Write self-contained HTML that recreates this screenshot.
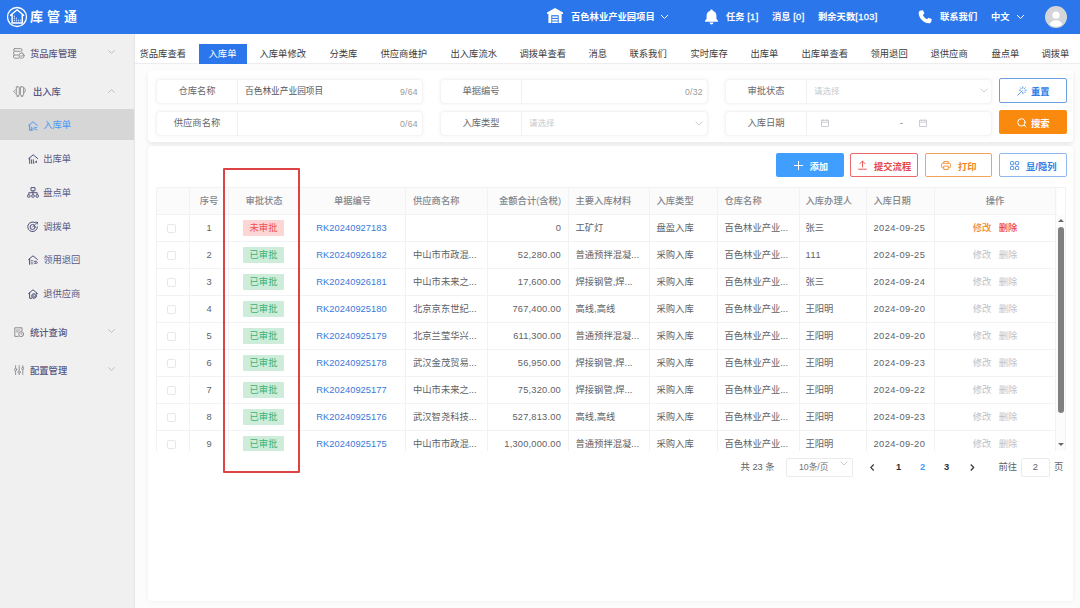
<!DOCTYPE html>
<html lang="zh-CN">
<head>
<meta charset="utf-8">
<title>库管通 - 入库单</title>
<style>
*{box-sizing:border-box;margin:0;padding:0}
html,body{width:1080px;height:608px;overflow:hidden}
body{position:relative;background:#fcfcfc;font-family:"Liberation Sans","Noto Sans CJK SC",sans-serif;font-size:9.3px;color:#606266;-webkit-font-smoothing:antialiased}
.abs{position:absolute}
/* header */
#hd{position:absolute;left:0;top:0;width:1080px;height:34px;background:#2a76ea;color:#fff}
#hd .t{position:absolute;top:0;height:34px;line-height:34px;font-size:9.3px;white-space:nowrap;font-weight:700}
#hd .t b{font-weight:400;letter-spacing:.35px;-webkit-text-stroke:.3px #fff}
#logo-t{position:absolute;left:30px;top:0;height:34px;line-height:33px;font-size:13px;letter-spacing:4px;color:#fff;font-weight:700}
/* sidebar */
#sb{position:absolute;left:0;top:34px;width:134.500px;height:574px;background:#f0f0f0;box-shadow:inset -1.500px 0 1px -0.500px rgba(0,0,0,.05)}
#sb .it{position:absolute;left:0;width:134px;height:30px;line-height:30px;font-size:9.3px;color:#5a5a84;white-space:nowrap}
#sb .it.p{font-weight:500;color:#565680}
#sb .it span{position:absolute;top:0}
#sb .act{background:#d6d6d6;color:#4a9af5}
#sb svg{z-index:2}
/* tabs */
#tabs{position:absolute;left:134.500px;top:34px;width:946px;height:30px;background:#fff;border-bottom:1px solid #ededed}
#tabs .tb{position:absolute;top:10px;height:20px;line-height:20px;font-size:9.3px;color:#3c3c3c;white-space:nowrap;text-align:center}
#tabs .tb.on{background:#2a76ea;color:#fff}
/* panels */
.card{position:absolute;background:#fff;border-radius:4px}
.fld{position:absolute;height:25px;border:1px solid #f4f4f4;border-radius:4px;background:#fff;box-shadow:0 0 4px rgba(0,0,0,.055)}
.fld .lb{position:absolute;left:0;top:0;width:81px;height:23px;line-height:23px;text-align:center;border-right:1px solid #f0f0f0;color:#66686c;font-size:9.3px}
.fld .v{position:absolute;left:88px;top:0;height:23px;line-height:23px;font-size:8.7px;color:#555;white-space:nowrap}
.fld .ph{color:#c6c8cc;font-size:8.500px}
.fld .cnt{position:absolute;right:4px;top:0;height:23px;line-height:24px;font-size:8.7px;color:#999;letter-spacing:.3px}
.btn{position:absolute;height:24.5px;line-height:26px;border-radius:2px;font-size:9.3px;font-weight:700;text-align:center;white-space:nowrap;border:1px solid transparent}
/* table */
#tbl{position:absolute;left:156px;top:187px;width:910px;height:264px;overflow:hidden;border:1px solid #f1f2f4;border-bottom:none;background:#fff}
.row{position:absolute;left:0;width:900px;height:27px;border-bottom:1px solid #f1f2f4}
.row.h{background:#fbfbfb;color:#666;font-weight:500}
.c{position:absolute;top:0;height:27px;line-height:26px;font-size:9.3px;color:#606266;white-space:nowrap;overflow:hidden;border-right:1px solid #f1f2f4;padding:0 7px}
.row.h .c{color:#83868c}
.c.n2{letter-spacing:.2px}.c.n3{letter-spacing:.5px}.c.n4{letter-spacing:.42px}
.c.ctr{text-align:center;padding:0}
.c.r{text-align:right}
.c a{color:#3a78d8;text-decoration:none;letter-spacing:.05px;margin-right:2px}
.tag{display:inline-block;height:16px;line-height:16px;margin-right:1px;padding:0 6.900px;font-size:9.3px;border-radius:1px;vertical-align:middle;position:relative;top:-1px}
.tag.g{background:#cdecda;color:#3bb374}
.tag.rd{background:#fcd5d5;color:#f05050}
.cb{position:absolute;left:11px;top:9px;width:9px;height:9px;border:1px solid #e8e8e8;border-radius:2px;background:#fff}
.op1{color:#f08a24;font-weight:500}.op2{color:#f04040;font-weight:500;margin-left:7.500px}
.d2{margin-left:7.500px}
.dis{color:#bfc1c5}
.c.p6{padding-left:6.500px}.c.p5{padding-left:5.500px}
/* pagination */
#pg{position:absolute;top:458px;left:700px;width:370px;height:18px;font-size:9.3px;color:#606266}
#pg span{position:absolute;top:0;height:18px;line-height:18px;white-space:nowrap}
</style>
</head>
<body>
<div id="hd">
  <svg class="abs" style="left:5.900px;top:5.900px" width="22" height="22" viewBox="0 0 22 22" fill="none" stroke="#fff"><circle cx="11" cy="11" r="9.500" stroke-width="1.300"/><path d="M4.600 9.300L11.100 3.700l6.500 5.600M6.100 8.600v8.500h10.200V8.600" stroke-width="1.500" stroke-linejoin="round" stroke-linecap="round"/><path d="M8.400 9.800v6.400M10.400 11.800v4.400M12.400 13.800v2.400M14.300 13.800v2.400" stroke-width="1.100" stroke-dasharray="1 1"/></svg>
  <div id="logo-t">库管通</div>
  <svg class="abs" style="left:547px;top:8px" width="16" height="15" viewBox="0 0 16 15"><path d="M8 0 L16 4.6 V6 H14.6 V15 H1.4 V6 H0 V4.6 Z" fill="#fff"/><rect x="4.3" y="7.2" width="7.4" height="7.8" fill="#2a76ea"/><rect x="5.2" y="8.4" width="5.6" height="1.5" fill="#fff"/><rect x="5.2" y="11" width="5.6" height="1.5" fill="#fff"/><rect x="5.2" y="13.5" width="5.6" height="1.5" fill="#fff"/></svg>
  <div class="t" style="left:571px">百色林业产业园项目</div>
  <svg class="abs" style="left:660px;top:14px" width="9" height="6" viewBox="0 0 9 6" fill="none" stroke="#fff" stroke-width="1"><path d="M1 1 L4.5 4.5 L8 1"/></svg>
  <svg class="abs" style="left:704px;top:9px" width="15" height="16" viewBox="0 0 15 16" fill="#fff"><path d="M7.5 0.5c.8 0 1.3.5 1.3 1.2 2.2.6 3.6 2.4 3.6 4.9v3.2l1.6 2v.9H1v-.9l1.6-2V6.600c0-2.500 1.400-4.300 3.600-4.900C6.200 1 6.700.5 7.500.5z"/><path d="M5.600 13.600h3.800c0 1.100-.8 1.900-1.900 1.900s-1.900-.8-1.900-1.900z"/></svg>
  <div class="t" style="left:726px">任务 <b>[1]</b></div>
  <div class="t" style="left:772px">消息 <b>[0]</b></div>
  <div class="t" style="left:818px">剩余天数<b>[103]</b></div>
  <svg class="abs" style="left:918px;top:10px" width="14" height="14" viewBox="0 0 14 14" fill="#fff"><path d="M2.900 0.600 L5 0.300 L6.400 3.600 L4.800 4.900 C5.600 6.700 7.200 8.400 9.100 9.300 L10.400 7.700 L13.700 9.100 L13.400 11.200 C13.200 12.600 12 13.500 10.600 13.300 C5.200 12.500 1.400 8.600 0.700 3.400 C0.500 2 1.500 0.800 2.900 0.600z"/></svg>
  <div class="t" style="left:940px">联系我们</div>
  <div class="t" style="left:991px">中文</div>
  <svg class="abs" style="left:1016px;top:14px" width="9" height="6" viewBox="0 0 9 6" fill="none" stroke="#fff" stroke-width="1"><path d="M1 1 L4.500 4.500 L8 1"/></svg>
  <svg class="abs" style="left:1045px;top:6px" width="22" height="22" viewBox="0 0 22 22"><circle cx="11" cy="11" r="11" fill="#d4d5d8"/><circle cx="11" cy="9.200" r="3.600" fill="#fff"/><path d="M4.600 18.200c1.200-2.800 3.500-4 6.400-4s5.200 1.200 6.400 4A9.500 9.500 0 0 1 11 20.800a9.500 9.500 0 0 1-6.400-2.600z" fill="#fff"/></svg>
</div>

<div id="sb">
<svg class="abs" style="left:13px;top:13.500px" width="12" height="11" viewBox="0 0 12 11" fill="none" stroke="#8c8c90" stroke-width=".9" stroke-linecap="round" stroke-linejoin="round"><rect x=".6" y=".6" width="8.400" height="2.700" rx="1.200"/><path d="M.6 4.700v1.100c0 .7.500 1.200 1.200 1.200h3.600M9 4.600v-.1M.6 7.900v1.100c0 .7.500 1.200 1.200 1.200h3.800M.6 4.500c0-.700.500-1.200 1.200-1.200M.6 7.800c0-.5.300-.8.800-.8"/><circle cx="8.500" cy="7.700" r="2.600"/><path d="M7.300 7.700l.9.900 1.500-1.600"/></svg>
<svg class="abs" style="left:13px;top:51.500px" width="14" height="11.500" viewBox="0 0 14 11.500" fill="none" stroke="#8c8c90" stroke-width=".9" stroke-linecap="round" stroke-linejoin="round"><rect x="3.300" y=".8" width="3" height="8.600" rx=".7"/><rect x="7.400" y=".8" width="3.200" height="8.600" rx=".7"/><path d="M2.400 3.800L.7 5.500l1.700 1.700M10.600 1.600c2.200.3 2.600 4.200.2 5.600M4 10.700h1.600M8.200 10.700h1.600"/></svg>
<svg class="abs" style="left:28px;top:86.5px" width="10" height="10" viewBox="0 0 10 10" fill="none" stroke="#4a9af5" stroke-width="1" stroke-linecap="round" stroke-linejoin="round"><path d="M.6 4.500L5 .8l4.400 3.700M1.600 4v5.300h2.200"/><path d="M3.400 6.200v3M5 7v2.200M6.600 6.400h2.200M6.600 8h1.400l1 1.200" stroke-width=".9"/></svg>
<svg class="abs" style="left:27.5px;top:120px" width="10.5" height="10" viewBox="0 0 10.5 10" fill="none" stroke="#4d4d78" stroke-width="1" stroke-linecap="round" stroke-linejoin="round"><path d="M.7 4.600L5.200.8l4.500 3.800M1.700 4v5.400"/><path d="M3.600 5.800v3.600M5.400 5.800v3.600M6.800 8.600l1.400-1.200M8.400 7.200v1.400" stroke-width=".9"/></svg>
<svg class="abs" style="left:27px;top:153.300px" width="12" height="11" viewBox="0 0 12 11" fill="none" stroke="#4d4d78" stroke-width=".95" stroke-linejoin="round"><rect x="4" y=".6" width="4" height="3.200"/><path d="M6 3.800v1.900M1.800 7.700V5.700h8.400v2M6 5.700v2"/><rect x=".6" y="7.800" width="2.400" height="2.400" rx=".5"/><rect x="4.800" y="7.800" width="2.400" height="2.400" rx=".5"/><rect x="9" y="7.800" width="2.400" height="2.400" rx=".5"/></svg>
<svg class="abs" style="left:27px;top:186.5px" width="11.5" height="11.5" viewBox="0 0 11.5 11.5" fill="none" stroke="#4d4d78" stroke-width="1" stroke-linecap="round" stroke-linejoin="round"><path d="M10.400 5.800a4.800 4.800 0 1 1-2.600-4.300"/><circle cx="5.600" cy="6" r="2.500"/><path d="M5.600 6l4.600-4.600M8.600 1.200h1.800v1.800" stroke-width=".9"/></svg>
<svg class="abs" style="left:27.5px;top:220.5px" width="10" height="10" viewBox="0 0 10 10" fill="none" stroke="#4d4d78" stroke-width="1" stroke-linecap="round" stroke-linejoin="round"><path d="M.6 4.500L5 .8l4.400 3.700M1.600 4v5.300"/><path d="M3.200 5.600h.1M4.800 5.600h.1M3.200 7.200h.1M4.800 7.200h.1M3.200 8.800h.1M4.800 8.800h.1" stroke-width="1"/><path d="M6.600 6.600h1.800a.9.900 0 0 1 0 1.800H6.600M7.300 5.900l-.7.700.7.700" stroke-width=".8"/></svg>
<svg class="abs" style="left:27.5px;top:254.8px" width="10" height="10" viewBox="0 0 10 10" fill="none" stroke="#4d4d78" stroke-width="1" stroke-linecap="round" stroke-linejoin="round"><path d="M.6 4.500L5 .8l4.400 3.700M1.600 4v5.300h2M8.600 4.200v1"/><circle cx="6" cy="7" r="2.300"/><path d="M6 5.800a1.200 1.200 0 1 0 1.200 1.200" stroke-width=".8"/></svg>
<svg class="abs" style="left:13.5px;top:293px" width="10.5" height="10.5" viewBox="0 0 10.5 10.5" fill="none" stroke="#8c8c90" stroke-width="1" stroke-linecap="round" stroke-linejoin="round"><path d="M8 3.800V.8H.8v8.600h3.400"/><path d="M2.400 3h3.600M2.400 4.800h2" stroke-width=".8"/><circle cx="7.200" cy="7.200" r="2.500"/><path d="M7.200 6v1.300l.9.600" stroke-width=".8"/></svg>
<svg class="abs" style="left:13.5px;top:330.5px" width="10.5" height="10.5" viewBox="0 0 10.5 10.5" fill="none" stroke="#8c8c90" stroke-width="0.9" stroke-linecap="round" stroke-linejoin="round"><path d="M1.600.6v2.600M1.600 6v4M5.200.6v5M5.200 8.600v1.400M8.800.6v1.400M8.800 4.800v5.200"/><circle cx="1.600" cy="4.600" r="1.200"/><circle cx="5.200" cy="7.200" r="1.200"/><circle cx="8.800" cy="3.400" r="1.200"/></svg>
<svg class="abs" style="left:108px;top:16px" width="7" height="4" viewBox="0 0 7 4" fill="none" stroke="#b8b8bc" stroke-width="0.9" stroke-linecap="round" stroke-linejoin="round"><path d="M.6 .6l2.900 2.800L6.400.6"/></svg>
<svg class="abs" style="left:108px;top:54.5px" width="7" height="4" viewBox="0 0 7 4" fill="none" stroke="#b8b8bc" stroke-width="0.9" stroke-linecap="round" stroke-linejoin="round"><path d="M.6 3.400L3.500.6l2.900 2.800"/></svg>
<svg class="abs" style="left:108px;top:295px" width="7" height="4" viewBox="0 0 7 4" fill="none" stroke="#b8b8bc" stroke-width="0.9" stroke-linecap="round" stroke-linejoin="round"><path d="M.6 .6l2.900 2.800L6.400.6"/></svg>
<svg class="abs" style="left:108px;top:332.5px" width="7" height="4" viewBox="0 0 7 4" fill="none" stroke="#b8b8bc" stroke-width="0.9" stroke-linecap="round" stroke-linejoin="round"><path d="M.6 .6l2.900 2.800L6.400.6"/></svg>
  <div class="it p" style="top:5px"><span style="left:30px">货品库管理</span></div>
  <div class="it p" style="top:43px"><span style="left:33px">出入库</span></div>
  <div class="it act" style="top:75px;height:31px;line-height:33px"><span style="left:43.200px">入库单</span></div>
  <div class="it" style="top:110.300px"><span style="left:43.200px">出库单</span></div>
  <div class="it" style="top:144.300px"><span style="left:43.200px">盘点单</span></div>
  <div class="it" style="top:178px"><span style="left:43.200px">调拨单</span></div>
  <div class="it" style="top:211.300px"><span style="left:43.200px">领用退回</span></div>
  <div class="it" style="top:245px"><span style="left:43.200px">退供应商</span></div>
  <div class="it p" style="top:283.700px"><span style="left:30px">统计查询</span></div>
  <div class="it p" style="top:322px"><span style="left:30px">配置管理</span></div>
</div>

<div id="tabs">
  <div class="tb" style="left:5px">货品库查看</div>
  <div class="tb on" style="left:64px;width:48px">入库单</div>
  <div class="tb" style="left:125px">入库单修改</div>
  <div class="tb" style="left:195px">分类库</div>
  <div class="tb" style="left:246px">供应商维护</div>
  <div class="tb" style="left:316px">出入库流水</div>
  <div class="tb" style="left:385px">调拨单查看</div>
  <div class="tb" style="left:454px">消息</div>
  <div class="tb" style="left:495px">联系我们</div>
  <div class="tb" style="left:556px">实时库存</div>
  <div class="tb" style="left:616px">出库单</div>
  <div class="tb" style="left:667px">出库单查看</div>
  <div class="tb" style="left:736px">领用退回</div>
  <div class="tb" style="left:796px">退供应商</div>
  <div class="tb" style="left:857px">盘点单</div>
  <div class="tb" style="left:907px">调拨单</div>
</div>

<!-- filter card -->
<div class="card" style="left:148px;top:69.500px;width:925px;height:72px;box-shadow:0 2px 4px rgba(0,0,0,.08)"></div>
<div class="fld" style="left:156px;top:78.500px;width:267px"><div class="lb">仓库名称</div><div class="v">百色林业产业园项目</div><div class="cnt">9/64</div></div>
<div class="fld" style="left:156px;top:110.500px;width:267px"><div class="lb">供应商名称</div><div class="cnt">0/64</div></div>
<div class="fld" style="left:440px;top:78.500px;width:268px"><div class="lb">单据编号</div><div class="cnt">0/32</div></div>
<div class="fld" style="left:440px;top:110.500px;width:268px"><div class="lb">入库类型</div><div class="v ph">请选择</div></div>
<div class="fld" style="left:725px;top:78.500px;width:267px"><div class="lb">审批状态</div><div class="v ph">请选择</div></div>
<div class="fld" style="left:725px;top:110.500px;width:267px"><div class="lb">入库日期</div><div class="v" style="left:174px;color:#666">-</div></div>
<div class="btn" style="left:999px;top:78px;width:67.500px;border-color:#6aa0e0;color:#2f7de6;background:#fff"><svg class="abs" style="left:17px;top:6.500px" width="10" height="10" viewBox="0 0 10 10" fill="none" stroke="#4a90e8" stroke-width=".9" stroke-linecap="round"><path d="M.8 9.200L5.200 4.800M5.800 .8v1.400M5.800 6.400v1.400M2.300 4.200h1.400M8 4.200h1.400M3.400 1.800l.9.900M7.400 5.800l.9.900M8.300 1.700l-.9.900"/></svg><span class="abs" style="left:31px;top:0">重置</span></div>
<div class="btn" style="left:999px;top:110.300px;width:67.500px;height:24px;background:#f98a0d;color:#fff"><svg class="abs" style="left:17px;top:6.800px" width="10" height="10" viewBox="0 0 11 11" fill="none" stroke="#fff" stroke-width="1.100" stroke-linecap="round"><circle cx="4.800" cy="4.800" r="4"/><path d="M7.800 7.800l2.200 2.200"/></svg><span class="abs" style="left:31px;top:0">搜索</span></div>

<svg class="abs" style="left:980px;top:88px" width="8" height="5" viewBox="0 0 8 5" fill="none" stroke="#c8cacf" stroke-width=".9"><path d="M.6.6l3.400 3.400L7.400.6"/></svg>
<svg class="abs" style="left:695px;top:121px" width="8" height="5" viewBox="0 0 8 5" fill="none" stroke="#c8cacf" stroke-width=".9"><path d="M.6.6l3.400 3.400L7.400.6"/></svg>
<svg class="abs" style="left:821px;top:118.500px" width="8" height="8" viewBox="0 0 8 8" fill="none" stroke="#c0c2c8" stroke-width=".8"><rect x=".6" y="1.200" width="6.800" height="6.200"/><path d="M.6 3.200h6.800M2.400.4v1.600M5.600.4v1.600"/></svg>
<svg class="abs" style="left:919px;top:118.500px" width="8" height="8" viewBox="0 0 8 8" fill="none" stroke="#c0c2c8" stroke-width=".8"><rect x=".6" y="1.200" width="6.800" height="6.200"/><path d="M.6 3.200h6.800M2.400.4v1.600M5.600.4v1.600"/></svg>
<!-- main card -->
<div class="card" style="left:148px;top:146px;width:925px;height:454.500px;box-shadow:0 0 5px rgba(0,0,0,.06)"></div>
<div class="btn" style="left:776px;top:152.600px;width:67.500px;background:#409eff;color:#fff"><svg class="abs" style="left:17px;top:7px" width="9" height="9" viewBox="0 0 9 9" fill="none" stroke="#fff" stroke-width="1"><path d="M4.500 0v9M0 4.500h9"/></svg><span class="abs" style="left:32.500px;top:0">添加</span></div>
<div class="btn" style="left:850px;top:152.600px;width:67.500px;border-color:#ee6a6a;color:#e64848;background:#fff"><svg class="abs" style="left:7px;top:6.500px" width="9" height="10" viewBox="0 0 9 10" fill="none" stroke="#e64848" stroke-width=".9" stroke-linecap="round" stroke-linejoin="round"><path d="M4.500 7V1.200M2 3.600l2.500-2.600L7 3.600M.6 9.200h7.800"/></svg><span class="abs" style="left:23px;top:0">提交流程</span></div>
<div class="btn" style="left:925px;top:152.600px;width:67px;border-color:#f2a35c;color:#f08424;background:#fff"><svg class="abs" style="left:15px;top:7px" width="10" height="9" viewBox="0 0 11 10" fill="none" stroke="#f08424" stroke-width=".9" stroke-linejoin="round"><path d="M3 2.600V.6h5v2M3 7.400H1.400a.8.800 0 0 1-.8-.8V3.400a.8.800 0 0 1 .8-.8h8.200a.8.800 0 0 1 .8.800v3.200a.8.800 0 0 1-.8.800H8"/><rect x="3" y="5.600" width="5" height="3.800"/></svg><span class="abs" style="left:32px;top:0">打印</span></div>
<div class="btn" style="left:999px;top:152.600px;width:67.500px;border-color:#8db8f0;color:#2f7de6;background:#fff"><svg class="abs" style="left:10px;top:7px" width="9.500" height="9.500" viewBox="0 0 10 10" fill="none" stroke="#2f7de6" stroke-width=".9"><rect x=".6" y=".6" width="3.400" height="3.400" rx=".8"/><rect x="5.800" y=".6" width="3.400" height="3.400" rx=".8"/><rect x=".6" y="5.800" width="3.400" height="3.400" rx=".8"/><rect x="5.800" y="5.800" width="3.400" height="3.400" rx=".8"/></svg><span class="abs" style="left:26px;top:0">显/隐列</span></div>

<div id="tbl">
<div class="row h" style="top:0"><div class="c ctr" style="left:-1px;width:34px"></div><div class="c ctr" style="left:33px;width:39px">序号</div><div class="c ctr" style="left:72px;width:71px">审批状态</div><div class="c ctr" style="left:143px;width:106px">单据编号</div><div class="c " style="left:249px;width:82px">供应商名称</div><div class="c r" style="left:331px;width:81px">金额合计(含税)</div><div class="c p6" style="left:412px;width:81px">主要入库材料</div><div class="c p6" style="left:493px;width:68px">入库类型</div><div class="c p6" style="left:561px;width:82px">仓库名称</div><div class="c p5" style="left:643px;width:67px">入库办理人</div><div class="c p6" style="left:710px;width:68px">入库日期</div><div class="c ctr" style="left:778px;width:121px">操作</div></div>
<div class="row" style="top:27px"><div class="c ctr" style="left:-1px;width:34px"><i class="cb"></i></div><div class="c ctr" style="left:33px;width:39px">1</div><div class="c ctr" style="left:72px;width:71px"><span class="tag rd">未审批</span></div><div class="c ctr" style="left:143px;width:106px"><a>RK20240927183</a></div><div class="c " style="left:249px;width:82px"></div><div class="c r n2" style="left:331px;width:81px">0</div><div class="c p6" style="left:412px;width:81px">工矿灯</div><div class="c p6" style="left:493px;width:68px">盘盈入库</div><div class="c p6" style="left:561px;width:82px">百色林业产业...</div><div class="c p5" style="left:643px;width:67px">张三</div><div class="c n4 p6" style="left:710px;width:68px">2024-09-25</div><div class="c ctr" style="left:778px;width:121px"><span class="op1">修改</span><span class="op2">删除</span></div></div>
<div class="row" style="top:54px"><div class="c ctr" style="left:-1px;width:34px"><i class="cb"></i></div><div class="c ctr" style="left:33px;width:39px">2</div><div class="c ctr" style="left:72px;width:71px"><span class="tag g">已审批</span></div><div class="c ctr" style="left:143px;width:106px"><a>RK20240926182</a></div><div class="c " style="left:249px;width:82px">中山市市政混...</div><div class="c r n2" style="left:331px;width:81px">52,280.00</div><div class="c p6" style="left:412px;width:81px">普通预拌混凝...</div><div class="c p6" style="left:493px;width:68px">采购入库</div><div class="c p6" style="left:561px;width:82px">百色林业产业...</div><div class="c n3 p5" style="left:643px;width:67px">111</div><div class="c n4 p6" style="left:710px;width:68px">2024-09-25</div><div class="c ctr" style="left:778px;width:121px"><span class="dis">修改</span><span class="dis d2">删除</span></div></div>
<div class="row" style="top:81px"><div class="c ctr" style="left:-1px;width:34px"><i class="cb"></i></div><div class="c ctr" style="left:33px;width:39px">3</div><div class="c ctr" style="left:72px;width:71px"><span class="tag g">已审批</span></div><div class="c ctr" style="left:143px;width:106px"><a>RK20240926181</a></div><div class="c " style="left:249px;width:82px">中山市未来之...</div><div class="c r n2" style="left:331px;width:81px">17,600.00</div><div class="c p6" style="left:412px;width:81px">焊接钢管,焊...</div><div class="c p6" style="left:493px;width:68px">采购入库</div><div class="c p6" style="left:561px;width:82px">百色林业产业...</div><div class="c p5" style="left:643px;width:67px">张三</div><div class="c n4 p6" style="left:710px;width:68px">2024-09-24</div><div class="c ctr" style="left:778px;width:121px"><span class="dis">修改</span><span class="dis d2">删除</span></div></div>
<div class="row" style="top:108px"><div class="c ctr" style="left:-1px;width:34px"><i class="cb"></i></div><div class="c ctr" style="left:33px;width:39px">4</div><div class="c ctr" style="left:72px;width:71px"><span class="tag g">已审批</span></div><div class="c ctr" style="left:143px;width:106px"><a>RK20240925180</a></div><div class="c " style="left:249px;width:82px">北京京东世纪...</div><div class="c r n2" style="left:331px;width:81px">767,400.00</div><div class="c p6" style="left:412px;width:81px">高线,高线</div><div class="c p6" style="left:493px;width:68px">采购入库</div><div class="c p6" style="left:561px;width:82px">百色林业产业...</div><div class="c p5" style="left:643px;width:67px">王阳明</div><div class="c n4 p6" style="left:710px;width:68px">2024-09-20</div><div class="c ctr" style="left:778px;width:121px"><span class="dis">修改</span><span class="dis d2">删除</span></div></div>
<div class="row" style="top:135px"><div class="c ctr" style="left:-1px;width:34px"><i class="cb"></i></div><div class="c ctr" style="left:33px;width:39px">5</div><div class="c ctr" style="left:72px;width:71px"><span class="tag g">已审批</span></div><div class="c ctr" style="left:143px;width:106px"><a>RK20240925179</a></div><div class="c " style="left:249px;width:82px">北京兰莹华兴...</div><div class="c r n2" style="left:331px;width:81px">611,300.00</div><div class="c p6" style="left:412px;width:81px">普通预拌混凝...</div><div class="c p6" style="left:493px;width:68px">采购入库</div><div class="c p6" style="left:561px;width:82px">百色林业产业...</div><div class="c p5" style="left:643px;width:67px">王阳明</div><div class="c n4 p6" style="left:710px;width:68px">2024-09-20</div><div class="c ctr" style="left:778px;width:121px"><span class="dis">修改</span><span class="dis d2">删除</span></div></div>
<div class="row" style="top:162px"><div class="c ctr" style="left:-1px;width:34px"><i class="cb"></i></div><div class="c ctr" style="left:33px;width:39px">6</div><div class="c ctr" style="left:72px;width:71px"><span class="tag g">已审批</span></div><div class="c ctr" style="left:143px;width:106px"><a>RK20240925178</a></div><div class="c " style="left:249px;width:82px">武汉金茂贸易...</div><div class="c r n2" style="left:331px;width:81px">56,950.00</div><div class="c p6" style="left:412px;width:81px">焊接钢管,焊...</div><div class="c p6" style="left:493px;width:68px">采购入库</div><div class="c p6" style="left:561px;width:82px">百色林业产业...</div><div class="c p5" style="left:643px;width:67px">王阳明</div><div class="c n4 p6" style="left:710px;width:68px">2024-09-23</div><div class="c ctr" style="left:778px;width:121px"><span class="dis">修改</span><span class="dis d2">删除</span></div></div>
<div class="row" style="top:189px"><div class="c ctr" style="left:-1px;width:34px"><i class="cb"></i></div><div class="c ctr" style="left:33px;width:39px">7</div><div class="c ctr" style="left:72px;width:71px"><span class="tag g">已审批</span></div><div class="c ctr" style="left:143px;width:106px"><a>RK20240925177</a></div><div class="c " style="left:249px;width:82px">中山市未来之...</div><div class="c r n2" style="left:331px;width:81px">75,320.00</div><div class="c p6" style="left:412px;width:81px">焊接钢管,焊...</div><div class="c p6" style="left:493px;width:68px">采购入库</div><div class="c p6" style="left:561px;width:82px">百色林业产业...</div><div class="c p5" style="left:643px;width:67px">王阳明</div><div class="c n4 p6" style="left:710px;width:68px">2024-09-22</div><div class="c ctr" style="left:778px;width:121px"><span class="dis">修改</span><span class="dis d2">删除</span></div></div>
<div class="row" style="top:216px"><div class="c ctr" style="left:-1px;width:34px"><i class="cb"></i></div><div class="c ctr" style="left:33px;width:39px">8</div><div class="c ctr" style="left:72px;width:71px"><span class="tag g">已审批</span></div><div class="c ctr" style="left:143px;width:106px"><a>RK20240925176</a></div><div class="c " style="left:249px;width:82px">武汉智尧科技...</div><div class="c r n2" style="left:331px;width:81px">527,813.00</div><div class="c p6" style="left:412px;width:81px">高线,高线</div><div class="c p6" style="left:493px;width:68px">采购入库</div><div class="c p6" style="left:561px;width:82px">百色林业产业...</div><div class="c p5" style="left:643px;width:67px">王阳明</div><div class="c n4 p6" style="left:710px;width:68px">2024-09-23</div><div class="c ctr" style="left:778px;width:121px"><span class="dis">修改</span><span class="dis d2">删除</span></div></div>
<div class="row" style="top:243px"><div class="c ctr" style="left:-1px;width:34px"><i class="cb"></i></div><div class="c ctr" style="left:33px;width:39px">9</div><div class="c ctr" style="left:72px;width:71px"><span class="tag g">已审批</span></div><div class="c ctr" style="left:143px;width:106px"><a>RK20240925175</a></div><div class="c " style="left:249px;width:82px">中山市市政混...</div><div class="c r n2" style="left:331px;width:81px">1,300,000.00</div><div class="c p6" style="left:412px;width:81px">普通预拌混凝...</div><div class="c p6" style="left:493px;width:68px">采购入库</div><div class="c p6" style="left:561px;width:82px">百色林业产业...</div><div class="c p5" style="left:643px;width:67px">王阳明</div><div class="c n4 p6" style="left:710px;width:68px">2024-09-20</div><div class="c ctr" style="left:778px;width:121px"><span class="dis">修改</span><span class="dis d2">删除</span></div></div>
<div class="abs" style="left:899px;top:27px;width:10px;height:237px;background:#fcfcfc"></div>
<div class="abs" style="left:901px;top:39px;width:5.500px;height:186px;background:#808080;border-radius:3px"></div>
<div class="abs" style="left:900.500px;top:31px;width:0;height:0;border-left:3px solid transparent;border-right:3px solid transparent;border-bottom:3.500px solid #6a6a6a"></div>
<div class="abs" style="left:900.500px;top:255px;width:0;height:0;border-left:3px solid transparent;border-right:3px solid transparent;border-top:3.500px solid #6a6a6a"></div>
</div>

<div id="pg">
  <span style="left:40.500px">共 23 条</span>
  <span style="left:85.500px;width:67px;top:-.5px;height:19px;border:1px solid #ebebeb;border-radius:2px;padding-left:12.500px;font-size:8.700px;line-height:17.500px;color:#707378">10条/页</span>
  <svg class="abs" style="left:140px;top:3px" width="8" height="5" viewBox="0 0 8 5" fill="none" stroke="#c8cacf" stroke-width=".9"><path d="M.6.6l3.400 3.400L7.400.6"/></svg>
  <svg class="abs" style="left:170px;top:5.500px" width="4.500" height="7" viewBox="0 0 5 8" fill="none" stroke="#3a3a3a" stroke-width="1.400"><path d="M4.200.6L.8 4l3.400 3.400"/></svg>
  <span style="left:196px;font-weight:700;color:#303133">1</span>
  <span style="left:220px;font-weight:700;color:#409eff">2</span>
  <span style="left:244px;font-weight:700;color:#303133">3</span>
  <svg class="abs" style="left:270px;top:5.500px" width="4.500" height="7" viewBox="0 0 5 8" fill="none" stroke="#3a3a3a" stroke-width="1.400"><path d="M.8.6L4.200 4 .8 7.400"/></svg>
  <span style="left:298.500px">前往</span>
  <span style="left:320.500px;width:29.500px;top:-.5px;height:19px;border:1px solid #ebebeb;border-radius:2px;text-align:center;line-height:17.500px">2</span>
  <span style="left:354px">页</span>
</div>

<!-- red highlight box -->
<div class="abs" style="left:222.700px;top:167.700px;width:77.800px;height:305.500px;border:2.500px solid #de4343;border-radius:1px"></div>
</body>
</html>
